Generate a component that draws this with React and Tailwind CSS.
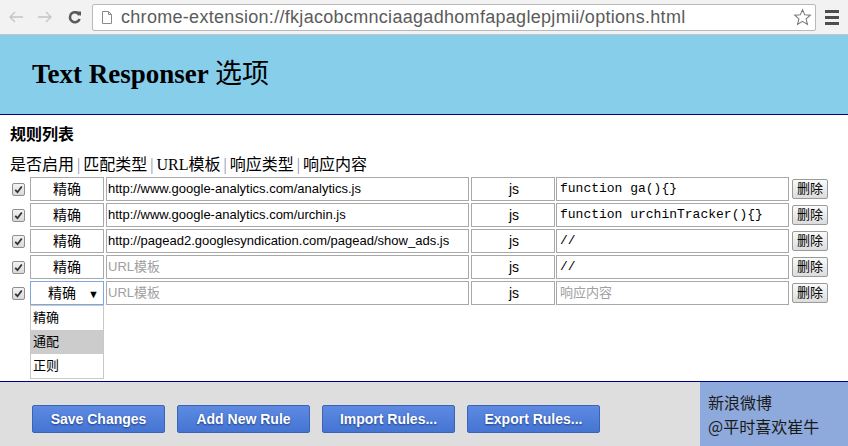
import { useState } from 'react';

const rules = [
  { url: 'http://www.google-analytics.com/analytics.js', content: 'function ga(){}' },
  { url: 'http://www.google-analytics.com/urchin.js', content: 'function urchinTracker(){}' },
  { url: 'http://pagead2.googlesyndication.com/pagead/show_ads.js', content: '//' },
  { url: '', content: '//' },
  { url: '', content: '', open: true }
];

const matchTypes = ['精确', '通配', '正则'];

const sans = { fontFamily: '"Liberation Sans", Arial, "Noto Sans CJK SC", sans-serif' };

function CheckBox() {
  return (
    <span className="flex h-[13px] w-[13px] items-center justify-center rounded-[2px] border border-[#8f8f8f] bg-gradient-to-b from-[#f4f4f4] to-[#d8d8d8]">
      <svg width="9" height="9" viewBox="0 0 9 9">
        <path d="M1.2 4.8 L3.5 7.2 L7.8 1.5" fill="none" stroke="#333" strokeWidth="1.8" />
      </svg>
    </span>
  );
}

function BrowserBar() {
  return (
    <div className="flex h-[35px] items-center border-b border-[#c4c4c4] bg-[#f2f2f2]">
      <div className="flex w-[92px] items-center pl-[7px]">
        <svg width="18" height="14" viewBox="0 0 18 14" className="mr-[11px]">
          <path d="M8 2 L3 7 L8 12 M3 7 H16" fill="none" stroke="#c4c4c4" strokeWidth="1.3" />
        </svg>
        <svg width="18" height="14" viewBox="0 0 18 14" className="mr-[13px]">
          <path d="M10 2 L15 7 L10 12 M15 7 H2" fill="none" stroke="#c4c4c4" strokeWidth="1.3" />
        </svg>
        <svg width="16" height="16" viewBox="0 0 16 16">
          <path d="M12.5 6.2 A5 5 0 1 0 12.6 10" fill="none" stroke="#5a5a5a" strokeWidth="2.6" />
          <path d="M9.5 2.5 H14 V7 Z" fill="#5a5a5a" />
        </svg>
      </div>
      <div className="flex h-[27px] w-[724px] items-center rounded-[2px] border border-[#b9b9b9] bg-white pl-[8px]">
        <svg width="12" height="15" viewBox="0 0 12 15" className="mr-[8px]">
          <path d="M1.5 1.5 H7.5 L10.5 4.5 V13.5 H1.5 Z M7.5 1.5 V4.5 H10.5" fill="none" stroke="#8a8a8a" strokeWidth="1" />
        </svg>
        <span className="flex-1 text-[18px] leading-none tracking-[0.3px] text-[#5b5b5b]" style={sans}>
          chrome-extension://fkjacobcmnciaagadhomfapaglepjmii/options.html
        </span>
        <svg width="19" height="19" viewBox="0 0 20 20" className="mr-[3px]">
          <path d="M10 1.8 L12.4 7.2 L18.2 7.6 L13.8 11.4 L15.2 17.2 L10 14.1 L4.8 17.2 L6.2 11.4 L1.8 7.6 L7.6 7.2 Z" fill="none" stroke="#777" strokeWidth="1.1" />
        </svg>
      </div>
      <div className="flex flex-1 flex-col items-center gap-[3px]">
        <span className="h-[3px] w-[14px] bg-[#4d4d4d]" />
        <span className="h-[3px] w-[14px] bg-[#4d4d4d]" />
        <span className="h-[3px] w-[14px] bg-[#4d4d4d]" />
      </div>
    </div>
  );
}

function RuleRow({ rule }) {
  const [type] = useState('精确');
  return (
    <div className="relative flex h-[26px] items-center text-[13px]" style={sans}>
      <div className="flex w-[30px] justify-center pl-[6px]">
        <CheckBox />
      </div>
      <div
        className={
          rule.open
            ? 'relative flex h-[24px] w-[74px] items-center justify-center border border-[#7fa6df] bg-white pr-[10px] text-[14px]'
            : 'flex h-[24px] w-[74px] items-center justify-center border border-[#a9a9a9] bg-white text-[14px]'
        }
      >
        {type}
        {rule.open && <span className="absolute right-[4px] top-[4px] text-[11px]">▼</span>}
      </div>
      <div className="ml-[2px] flex h-[24px] w-[363px] items-center border border-[#a9a9a9] bg-white pl-[1px]">
        {rule.url ? <span>{rule.url}</span> : <span className="text-[#a0a0a0]">URL模板</span>}
      </div>
      <div className="ml-[2px] flex h-[24px] w-[84px] items-center justify-center border border-[#a9a9a9] bg-white pl-[2px] text-[14px]">
        js
      </div>
      <div
        className="ml-[1px] flex h-[24px] w-[233px] items-center border border-[#a9a9a9] bg-white pl-[3px] text-[13px]"
        style={rule.content ? { fontFamily: '"Liberation Mono", "Courier New", monospace' } : sans}
      >
        {rule.content ? <span>{rule.content}</span> : <span className="text-[#a0a0a0]">响应内容</span>}
      </div>
      <button className="ml-[3px] flex h-[20px] w-[36px] items-center justify-center rounded-[2px] border border-[#9a9a9a] bg-gradient-to-b from-[#fafafa] to-[#dcdcdc] text-[13px] text-black">
        删除
      </button>
      {rule.open && (
        <div className="absolute left-[30px] top-[25px] z-10 w-[74px] border border-[#c8c8c8] bg-white">
          {matchTypes.map((t, i) => (
            <div key={t} className={i === 1 ? 'h-[24px] bg-[#cccccc] pl-[2px] leading-[24px]' : 'h-[24px] pl-[2px] leading-[24px]'}>
              {t}
            </div>
          ))}
        </div>
      )}
    </div>
  );
}

function FooterButton({ label }) {
  return (
    <button
      className="h-[28px] w-[133px] rounded-[2px] border border-[#3c63b8] bg-gradient-to-b from-[#5d8be2] to-[#4574d3] text-[14px] font-bold text-white [text-shadow:0_1px_2px_#1c3a80]"
      style={sans}
    >
      {label}
    </button>
  );
}

export default function App() {
  return (
    <div className="flex h-[446px] w-[848px] flex-col overflow-hidden bg-white">
      <BrowserBar />

      <div className="flex h-[80px] items-center border-b border-[#000080] bg-[#87ceeb] pl-[32px]">
        <h1
          className="text-[27px] font-bold text-black"
          style={{ fontFamily: '"Liberation Serif", "Times New Roman", "Noto Sans CJK SC", serif' }}
        >
          Text Responser <span className="font-normal">选项</span>
        </h1>
      </div>

      <div className="flex-1 pl-[10px] pt-[10px]" style={{ fontFamily: '"Liberation Serif", "Noto Sans CJK SC", serif' }}>
        <h2 className="text-[16px] font-bold leading-[20px]">规则列表</h2>
        <div className="mt-[10px] flex h-[20px] items-center text-[16px] leading-[20px]">
          <span>是否启用</span>
          <span className="mx-[3px] text-[#8a8aa8]">|</span>
          <span>匹配类型</span>
          <span className="mx-[3px] text-[#8a8aa8]">|</span>
          <span>URL模板</span>
          <span className="mx-[3px] text-[#8a8aa8]">|</span>
          <span>响应类型</span>
          <span className="mx-[3px] text-[#8a8aa8]">|</span>
          <span>响应内容</span>
        </div>
        <div className="-ml-[10px] mt-[1px]">
          {rules.map((rule, i) => (
            <RuleRow key={i} rule={rule} />
          ))}
        </div>
      </div>

      <div className="flex h-[65px] border-t border-[#000080] bg-[#dedede]">
        <div className="flex flex-1 items-center gap-[12px] pl-[32px] pt-[10px]">
          <FooterButton label="Save Changes" />
          <FooterButton label="Add New Rule" />
          <FooterButton label="Import Rules..." />
          <FooterButton label="Export Rules..." />
        </div>
        <div
          className="w-[148px] bg-[#8eaadc] pl-[8px] pt-[8px] text-[16px] leading-[24px] text-[#1a1a1a]"
          style={{ fontFamily: '"Noto Sans CJK SC", sans-serif' }}
        >
          <div>新浪微博</div>
          <div>@平时喜欢崔牛</div>
        </div>
      </div>
    </div>
  );
}
